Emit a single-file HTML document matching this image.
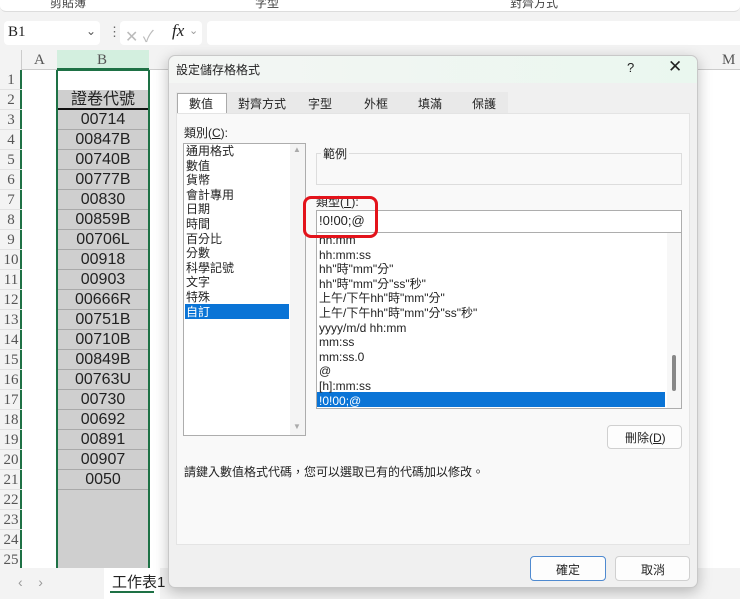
<!DOCTYPE html>
<html><head><meta charset="utf-8"><style>
*{box-sizing:border-box;margin:0;padding:0}
body{width:740px;height:599px;overflow:hidden;background:#f3f3f3;position:relative;font-family:"Liberation Sans","Noto Sans CJK TC",sans-serif;color:#222}
.a{position:absolute}
.cjk{font-family:"Liberation Sans","Noto Sans CJK TC",sans-serif}
.rh{position:absolute;left:0;width:22px;height:20px;font-size:15px;color:#555;text-align:center;font-family:"Liberation Serif",serif;border-bottom:1px solid #e2e2e2;line-height:20px}
.cb{position:absolute;left:58px;width:90px;height:20px;background:#cfcfcf;border-bottom:1px solid #a9a9a9;text-align:center;font-size:16px;line-height:20px;color:#222}
.li{position:absolute;font-size:12px;line-height:14.6px;white-space:nowrap}
</style></head><body>
<!-- ribbon -->
<div class="a" style="left:0;top:0;width:740px;height:12px;background:#fff;border-bottom:1px solid #ddd;border-radius:0 0 6px 6px"></div>
<div class="a cjk" style="left:50px;top:-6px;font-size:12px;color:#444">剪貼簿</div>
<div class="a cjk" style="left:255px;top:-6px;font-size:12px;color:#444">字型</div>
<div class="a cjk" style="left:510px;top:-6px;font-size:12px;color:#444">對齊方式</div>
<!-- formula bar -->
<div class="a" style="left:4px;top:21px;width:96px;height:24px;background:#fff;border-radius:4px"></div>
<div class="a" style="left:8px;top:24px;font-size:15px;font-family:'Liberation Serif',serif">B1</div>
<div class="a" style="left:86px;top:24px;font-size:12px;color:#555">⌄</div>
<div class="a" style="left:108px;top:24px;font-size:13px;color:#666">⋮</div>
<div class="a" style="left:120px;top:21px;width:82px;height:24px;background:#fff;border-radius:4px"></div>
<div class="a" style="left:125px;top:23px;font-size:16px;color:#bbb">✕ ✓</div>
<div class="a" style="left:172px;top:21px;font-size:17px;font-style:italic;font-family:'Liberation Serif',serif">fx</div>
<div class="a" style="left:189px;top:24px;font-size:11px;color:#999">⌄</div>
<div class="a" style="left:207px;top:21px;width:533px;height:24px;background:#fff;border-radius:4px 0 0 4px"></div>
<!-- grid -->
<div class="a" style="left:0;top:50px;width:740px;height:520px;background:#fff"></div>
<div class="a" style="left:0;top:50px;width:740px;height:20px;background:#f3f3f3;border-bottom:1px solid #ccc"></div>
<div class="a" style="left:0;top:50px;width:22px;height:520px;background:#f3f3f3;border-right:1px solid #ccc"></div>
<div class="a" style="left:57px;top:50px;width:92px;height:20px;background:#d3efdf;border-bottom:2px solid #1e7145"></div>
<div class="a" style="left:34px;top:52px;font-size:15px;color:#555;font-family:'Liberation Serif',serif">A</div>
<div class="a" style="left:97px;top:52px;font-size:15px;color:#555;font-family:'Liberation Serif',serif">B</div>
<div class="a" style="left:722px;top:52px;font-size:15px;color:#555;font-family:'Liberation Serif',serif">M</div>
<div class="a" style="left:0;top:70px;width:22px;height:500px;border-right:2px solid #1e7145"></div>
<div class="rh" style="top:70px">1</div><div class="rh" style="top:90px">2</div><div class="rh" style="top:110px">3</div><div class="rh" style="top:130px">4</div><div class="rh" style="top:150px">5</div><div class="rh" style="top:170px">6</div><div class="rh" style="top:190px">7</div><div class="rh" style="top:210px">8</div><div class="rh" style="top:230px">9</div><div class="rh" style="top:250px">10</div><div class="rh" style="top:270px">11</div><div class="rh" style="top:290px">12</div><div class="rh" style="top:310px">13</div><div class="rh" style="top:330px">14</div><div class="rh" style="top:350px">15</div><div class="rh" style="top:370px">16</div><div class="rh" style="top:390px">17</div><div class="rh" style="top:410px">18</div><div class="rh" style="top:430px">19</div><div class="rh" style="top:450px">20</div><div class="rh" style="top:470px">21</div><div class="rh" style="top:490px">22</div><div class="rh" style="top:510px">23</div><div class="rh" style="top:530px">24</div><div class="rh" style="top:550px">25</div>
<div class="a" style="left:58px;top:490px;width:90px;height:78px;background:#cfcfcf"></div>
<div class="cb cjk" style="top:90px;border-bottom:2px solid #111">證卷代號</div>
<div class="cb" style="top:110px">00714</div><div class="cb" style="top:130px">00847B</div><div class="cb" style="top:150px">00740B</div><div class="cb" style="top:170px">00777B</div><div class="cb" style="top:190px">00830</div><div class="cb" style="top:210px">00859B</div><div class="cb" style="top:230px">00706L</div><div class="cb" style="top:250px">00918</div><div class="cb" style="top:270px">00903</div><div class="cb" style="top:290px">00666R</div><div class="cb" style="top:310px">00751B</div><div class="cb" style="top:330px">00710B</div><div class="cb" style="top:350px">00849B</div><div class="cb" style="top:370px">00763U</div><div class="cb" style="top:390px">00730</div><div class="cb" style="top:410px">00692</div><div class="cb" style="top:430px">00891</div><div class="cb" style="top:450px">00907</div><div class="cb" style="top:470px">0050</div>
<div class="a" style="left:56px;top:70px;width:94px;height:500px;border:2px solid #1e7145;border-top-width:1px"></div>
<!-- sheet tabs -->
<div class="a" style="left:0;top:568px;width:740px;height:31px;background:#f3f3f3"></div>
<div class="a" style="left:18px;top:574px;font-size:14px;color:#999">‹ &nbsp;&nbsp; ›</div>
<div class="a" style="left:104px;top:568px;width:56px;height:31px;background:#fff"></div>
<div class="a cjk" style="left:112px;top:571px;font-size:15px">工作表1</div>
<div class="a" style="left:110px;top:591px;width:44px;height:2px;background:#1e7145"></div>
<!-- dialog -->
<div class="a" style="left:168px;top:55px;width:530px;height:533px;background:#f0f0f0;border:1px solid #c8c8c8;border-radius:7px;box-shadow:0 4px 14px rgba(0,0,0,.25)"></div>
<div class="a" style="left:169px;top:56px;width:528px;height:27px;background:linear-gradient(90deg,#f4f6f4,#eaf7ef);border-radius:7px 7px 0 0"></div>
<div class="a cjk" style="left:176px;top:61px;font-size:12px">設定儲存格格式</div>
<div class="a" style="left:627px;top:60px;font-size:13px">?</div>
<div class="a" style="left:668px;top:57px;font-size:17px">✕</div>
<!-- tabs -->
<div class="a" style="left:176px;top:92px;width:332px;height:22px;background:#e9e9e9"></div>
<div class="a" style="left:177px;top:93px;width:50px;height:21px;background:#fff;border:1px solid #aaa;border-bottom:none"></div>
<div class="a cjk" style="left:189px;top:95px;font-size:12px">數值</div>
<div class="a cjk" style="left:238px;top:95px;font-size:12px">對齊方式</div>
<div class="a cjk" style="left:308px;top:95px;font-size:12px">字型</div>
<div class="a cjk" style="left:364px;top:95px;font-size:12px">外框</div>
<div class="a cjk" style="left:418px;top:95px;font-size:12px">填滿</div>
<div class="a cjk" style="left:472px;top:95px;font-size:12px">保護</div>
<div class="a" style="left:176px;top:113px;width:514px;height:432px;background:#f9f9f9;border:1px solid #e4e4e4"></div>
<div class="a cjk" style="left:184px;top:124px;font-size:12px">類別(<u>C</u>):</div>
<div class="a" style="left:183px;top:143px;width:123px;height:293px;background:#fff;border:1px solid #adadad"></div>
<div class="a" style="left:290px;top:144px;width:15px;height:291px;background:#f4f4f4"></div>
<div class="a" style="left:293px;top:145px;font-size:8px;color:#aaa">▲</div>
<div class="a" style="left:293px;top:422px;font-size:8px;color:#aaa">▼</div>
<div class="a" style="left:185px;top:304px;width:104px;height:15px;background:#0a74d6"></div>
<div class="li cjk" style="left:186px;top:144px">通用格式<br>數值<br>貨幣<br>會計專用<br>日期<br>時間<br>百分比<br>分數<br>科學記號<br>文字<br>特殊<br><span style="color:#fff">自訂</span></div>
<!-- sample -->
<div class="a" style="left:316px;top:153px;width:366px;height:32px;border:1px solid #ddd"></div>
<div class="a cjk" style="left:321px;top:145px;font-size:12px;background:#f9f9f9;padding:0 2px">範例</div>
<div class="a cjk" style="left:316px;top:193px;font-size:12px">類型(<u>T</u>):</div>
<div class="a" style="left:316px;top:210px;width:366px;height:23px;background:#fff;border:1px solid #adadad"></div>
<div class="a" style="left:319px;top:213px;font-size:13px">!0!00;@</div>
<div class="a" style="left:316px;top:232px;width:366px;height:177px;background:#fff;border:1px solid #adadad;overflow:hidden"></div>
<div class="a" style="left:667px;top:233px;width:14px;height:175px;background:#f7f7f7"></div>
<div class="a" style="left:672px;top:355px;width:4px;height:36px;background:#888;border-radius:2px"></div>
<div class="a" style="left:317px;top:392px;width:348px;height:15px;background:#0a74d6"></div>
<div class="li cjk" style="left:319px;top:233px;height:175px;overflow:hidden;font-size:12px">hh:mm<br>hh:mm:ss<br>hh"時"mm"分"<br>hh"時"mm"分"ss"秒"<br>上午/下午hh"時"mm"分"<br>上午/下午hh"時"mm"分"ss"秒"<br>yyyy/m/d hh:mm<br>mm:ss<br>mm:ss.0<br>@<br>[h]:mm:ss<br><span style="color:#fff">!0!00;@</span></div>
<div class="a" style="left:303px;top:196px;width:75px;height:42px;border:3px solid #e3131b;border-radius:8px"></div>
<div class="a" style="left:607px;top:425px;width:75px;height:24px;background:#fdfdfd;border:1px solid #d0d0d0;border-radius:4px"></div>
<div class="a cjk" style="left:625px;top:429px;font-size:12px">刪除(<u>D</u>)</div>
<div class="a cjk" style="left:184px;top:463px;font-size:12px">請鍵入數值格式代碼，您可以選取已有的代碼加以修改。</div>
<div class="a" style="left:530px;top:556px;width:76px;height:25px;background:#fdfdfd;border:1.5px solid #4f8ad0;border-radius:4px"></div>
<div class="a cjk" style="left:556px;top:561px;font-size:12px">確定</div>
<div class="a" style="left:615px;top:556px;width:75px;height:25px;background:#fdfdfd;border:1px solid #d0d0d0;border-radius:4px"></div>
<div class="a cjk" style="left:641px;top:561px;font-size:12px">取消</div>
</body></html>
